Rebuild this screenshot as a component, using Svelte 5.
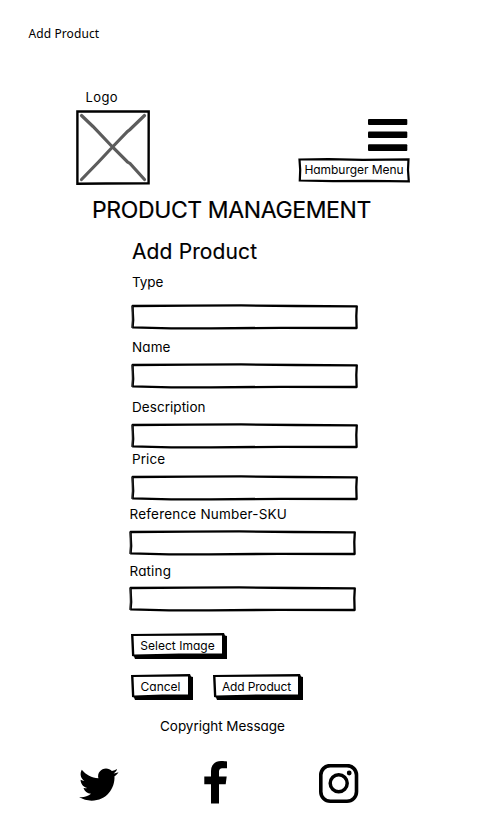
<script>
  const fields = [
    { label: 'Type', spacing: -0.1, top: 5, gap: 12 },
    { label: 'Name', spacing: 0.1, top: 7, gap: 6 },
    { label: 'Description', spacing: 0.05, top: 8, gap: 6 },
    { label: 'Price', spacing: 0.1, top: 0, gap: 6 },
    { label: 'Reference Number-SKU', spacing: 0.2, top: 3, gap: 6, shifted: true },
    { label: 'Rating', spacing: 0.15, top: 5, gap: 5, shifted: true }
  ];
</script>

{#snippet button(text, width, spacing)}
  <button class="btn" style:width="{width}px" style:letter-spacing="{spacing}px">
    <svg class="frame" {width} height="26" viewBox="0 0 {width} 26" aria-hidden="true">
      <path d="M0 1 L{width - 3} 0 L{width - 2} 2.6 L{width} 3 L{width} 26 L4 26 L3 23.5 L1 23Z" />
      <path d="M2.5 3 L{width - 5} 2.5 L{width - 5} 20.5 L{width / 2} 20.5 L3.3 21.5Z" fill="#fff" />
    </svg>
    <span>{text}</span>
  </button>
{/snippet}

<main>
  <p class="caption">Add Product</p>

  <header>
    <div class="brand">
      <span class="logo-label">Logo</span>
      <svg class="logo" width="74" height="75" viewBox="0 0 74 75" aria-label="Logo">
        <path d="M1.4 1.4 L72.7 1.5 L72.6 73.4 L30 73.5 L1.4 73.8Z" fill="none" stroke="#000" stroke-width="2.4" />
        <path d="M5.5 5.5 L17 16.5 L37 37.5 L51.5 52 L54 53.5 L68.5 69.5 M68.5 5.5 L54 19.5 L51.5 21.5 L37 36.5 L22 52.5 L5.5 69.5" fill="none" stroke="#5c5c5c" stroke-width="3.2" stroke-linecap="round" />
      </svg>
    </div>
    <div class="nav">
      <svg width="40" height="33" viewBox="0 0 40 33" aria-label="Menu">
        <rect x="0" y="0" width="39.3" height="6" rx="1" />
        <rect x="0" y="12.5" width="39.3" height="6.5" rx="1" />
        <rect x="0" y="25.3" width="39.3" height="6.7" rx="1" />
      </svg>
      <div class="tag">
        <svg class="frame" width="112" height="25" viewBox="0 0 112 25" aria-hidden="true">
          <path d="M1.5 1.5 L30 1.2 L65 1.8 L110.5 1.4 L110 12 L110.8 23.3 L70 22.8 L35 23.2 L1.8 22.5 L2.2 12Z" fill="#fff" stroke="#000" stroke-width="2.2" />
        </svg>
        <span>Hamburger Menu</span>
      </div>
    </div>
  </header>

  <h1>PRODUCT MANAGEMENT</h1>

  <form onsubmit={(e) => e.preventDefault()}>
    <h2>Add Product</h2>
    {#each fields as f}
      <div class="field" class:shifted={f.shifted} style:padding-top="{f.top}px">
        <div class="label" style:letter-spacing="{f.spacing}px" style:margin-bottom="{f.gap}px">{f.label}</div>
        <svg width="228" height="26" viewBox="0 0 228 26" aria-hidden="true">
          <path d="M1.6 2 L60 1.6 L110 1.4 L165 2 L225.8 2.3 L225.3 12 L225.6 24 L150 23.8 L80 24.4 L40 24.4 L1.6 23.3 L2.2 16 L1.8 8Z" fill="#fff" stroke="#000" stroke-width="2.3" stroke-linejoin="round" />
          <path d="M1.2 2 L1.6 8 L1.3 24" fill="none" stroke="#222" stroke-width="1.4" />
        </svg>
      </div>
    {/each}
    <div class="row first">{@render button('Select Image', 96, 0.03)}</div>
    <div class="row">
      {@render button('Cancel', 62, 0)}
      {@render button('Add Product', 90, -0.15)}
    </div>
  </form>

  <p class="copyright">Copyright Message</p>

  <footer>
    <svg class="twitter" width="40" height="33" viewBox="0 0 40 33" aria-label="Twitter">
      <path d="M39.5 4.2 C38.4 5.9 37.2 7.1 35.5 8.3 C36 20.5 27.5 32.7 12.6 32.7 C8 32.7 3.8 31.4 0.2 29.1 C4.6 29.6 8.8 28.4 12 25.8 C8.2 25.6 5.5 23.3 4.5 20.1 C5.8 20.3 7 20.3 8.1 19.9 C4.1 19 1.6 15.8 1.6 11.8 C2.8 12.5 4 12.8 5.3 12.9 C1.5 10.2 .6 5.5 2.8 1.8 C7 6.9 12.6 9.8 19.4 10.3 C18 4.8 22.1 .4 27 .4 C29.4 .4 31.4 1.3 32.9 2.9 C34.8 2.6 36.5 1.9 38.1 .9 C37.5 2.9 36.3 4.3 34.6 5.4 C36.3 5.2 37.9 4.8 39.5 4.2Z" />
    </svg>
    <svg class="facebook" width="24" height="43" viewBox="0 0 24 43" aria-label="Facebook">
      <path d="M23 .5 V7.2 H19 C15.8 7.2 15 8.7 15 11 V15.5 H22.7 L21.7 23.2 H15 V42.5 H7 V23.2 H.3 V15.5 H7 V10 C7 3.7 11 0 17 0 C19.8 0 22 .2 23 .5Z" />
    </svg>
    <svg class="instagram" width="40" height="40" viewBox="0 0 40 40" aria-label="Instagram">
      <rect x="1.8" y="1.6" width="35.7" height="35.7" rx="9.5" fill="none" stroke="#000" stroke-width="3.6" />
      <circle cx="19.7" cy="19.3" r="8.5" fill="none" stroke="#000" stroke-width="3.5" />
      <circle cx="30.2" cy="9" r="2.4" />
    </svg>
  </footer>
</main>

<style>
  :global(body) {
    background: #fff;
  }
  main {
    width: 485px;
    height: 829px;
    overflow: hidden;
    color: #000;
    font-family: 'Inter', 'Liberation Sans', sans-serif;
    font-feature-settings: 'cv11';
    display: flex;
    flex-direction: column;
    align-items: flex-start;
  }
  svg {
    display: block;
    flex: none;
  }
  p, h1, h2 {
    margin: 0;
    font-weight: 400;
    white-space: nowrap;
  }
  .caption {
    margin: 24px 0 0 28.5px;
    font: 12px/20px 'Noto Sans', sans-serif;
    letter-spacing: 0.1px;
  }
  header {
    width: 334px;
    margin: 42px 0 0 76px;
    display: flex;
    justify-content: space-between;
  }
  .logo-label {
    display: block;
    margin-left: 9.5px;
    height: 24px;
    font-size: 13px;
    line-height: 22px;
    letter-spacing: 0.4px;
  }
  .nav {
    display: flex;
    flex-direction: column;
    align-items: flex-end;
    padding-top: 33px;
  }
  .nav > svg {
    margin-right: 2px;
  }
  .tag {
    position: relative;
    width: 112px;
    height: 25px;
    margin-top: 6px;
    font-size: 12px;
    line-height: 24px;
    letter-spacing: -0.05px;
    text-align: center;
    white-space: nowrap;
  }
  .frame {
    position: absolute;
    inset: 0;
  }
  .tag span,
  .btn span {
    position: relative;
  }
  h1 {
    margin: 10px 0 0 92px;
    font-size: 23px;
    line-height: 31px;
    height: 30px;
    letter-spacing: -0.38px;
    -webkit-text-stroke: 0.2px #000;
  }
  form {
    margin: 12px 0 0 131px;
  }
  h2 {
    margin-left: 1px;
    font-size: 21px;
    line-height: 30px;
    letter-spacing: 0.13px;
    -webkit-text-stroke: 0.15px #000;
  }
  .field.shifted {
    margin-left: -2.5px;
  }
  .label {
    margin-left: 1px;
    font-size: 13.5px;
    line-height: 20px;
    white-space: nowrap;
  }
  .row {
    display: flex;
    gap: 20px;
    margin-top: 15px;
  }
  .row.first {
    margin-top: 21px;
  }
  .btn {
    position: relative;
    height: 26px;
    padding: 0 3px 1px 0;
    border: 0;
    background: none;
    color: #000;
    font: 12px/25px 'Inter', 'Liberation Sans', sans-serif;
    font-feature-settings: 'cv11';
    white-space: nowrap;
  }
  .copyright {
    margin: 15px 0 0 160px;
    font-size: 13.5px;
    line-height: 22px;
    letter-spacing: -0.03px;
  }
  footer {
    display: flex;
    margin: 24px 0 0 79px;
  }
  .twitter {
    margin-top: 7px;
  }
  .facebook {
    margin-left: 85px;
  }
  .instagram {
    margin: 3px 0 0 91px;
  }
</style>
